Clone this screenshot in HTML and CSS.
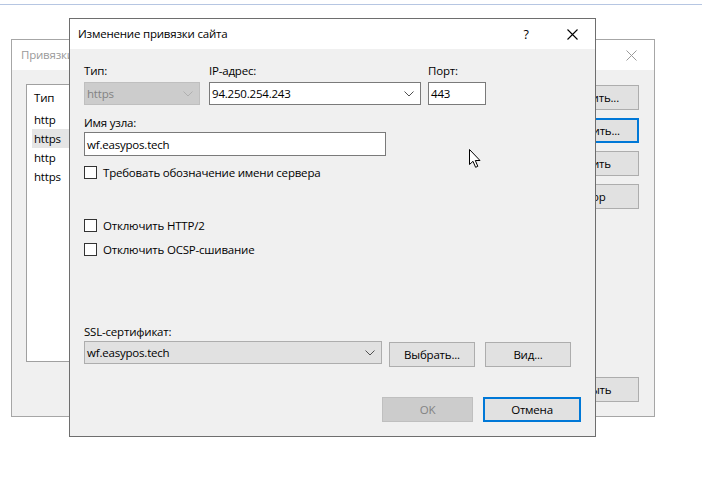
FILE: index.html
```html
<!DOCTYPE html>
<html lang="ru">
<head>
<meta charset="utf-8">
<title>Изменение привязки сайта</title>
<link rel="stylesheet" href="styles.css">
</head>
<body>
<div class="desk">
  <div class="topline"></div>

  <div class="win back">
    <div class="tb">
      <span class="ttl inactive">Привязки сайта</span>
      <span class="tbbtn close"><svg width="11" height="11" viewBox="0 0 11 11"><path d="M0.5 0.5L10.5 10.5M10.5 0.5L0.5 10.5" stroke="#9a9a9a" stroke-width="1"/></svg></span>
    </div>
    <div class="bbody">
      <div class="list">
        <div class="lh">Тип</div>
        <div class="li">http</div>
        <div class="li sel">https</div>
        <div class="li">http</div>
        <div class="li">https</div>
      </div>
      <div class="bcol">
        <button class="btn bb">Добавить...</button>
        <button class="btn bb focus">Изменить...</button>
        <button class="btn bb">Удалить</button>
        <button class="btn bb">Обзор</button>
        <button class="btn bb last">Закрыть</button>
      </div>
    </div>
  </div>

  <div class="win front">
    <div class="tb">
      <span class="ttl">Изменение привязки сайта</span>
      <span class="tbbtn help">?</span>
      <span class="tbbtn close"><svg width="11" height="11" viewBox="0 0 11 11"><path d="M0.5 0.5L10.5 10.5M10.5 0.5L0.5 10.5" stroke="#000" stroke-width="1.1"/></svg></span>
    </div>
    <div class="fbody">
      <div class="row1">
        <div class="fld f-type">
          <label class="lbl">Тип:</label>
          <div class="combo disabled"><span>https</span><svg class="chev" width="10" height="6" viewBox="0 0 10 6"><path d="M0.5 0.5L5 5L9.5 0.5" fill="none" stroke="#b0b0b0"/></svg></div>
        </div>
        <div class="fld f-ip">
          <label class="lbl">IP-адрес:</label>
          <div class="combo edit"><span>94.250.254.243</span><svg class="chev" width="10" height="6" viewBox="0 0 10 6"><path d="M0.5 0.5L5 5L9.5 0.5" fill="none" stroke="#505050"/></svg></div>
        </div>
        <div class="fld f-port">
          <label class="lbl">Порт:</label>
          <div class="text"><span>443</span></div>
        </div>
      </div>

      <label class="lbl host-lbl">Имя узла:</label>
      <div class="text host"><span>wf.easypos.tech</span></div>

      <div class="chk first"><span class="box"></span><span>Требовать обозначение имени сервера</span></div>
      <div class="chk second"><span class="box"></span><span>Отключить HTTP/2</span></div>
      <div class="chk"><span class="box"></span><span>Отключить OCSP-сшивание</span></div>

      <label class="lbl ssl-lbl">SSL-сертификат:</label>
      <div class="sslrow">
        <div class="combo btnlike ssl"><span>wf.easypos.tech</span><svg class="chev" width="10" height="6" viewBox="0 0 10 6"><path d="M0.5 0.5L5 5L9.5 0.5" fill="none" stroke="#505050"/></svg></div>
        <button class="btn sbtn">Выбрать...</button>
        <button class="btn sbtn">Вид...</button>
      </div>

      <div class="foot">
        <button class="btn ok" disabled>OK</button>
        <button class="btn cancel">Отмена</button>
      </div>
    </div>
  </div>

  <svg class="cursor" width="13" height="20" viewBox="0 0 13 20"><path d="M0.5 0.5L0.5 15.5L4 12.3L6.6 18.3L8.8 17.3L6.3 11.5L11 11.5Z" fill="#fff" stroke="#000" stroke-width="1" stroke-linejoin="miter"/></svg>
</div>
</body>
</html>
```

FILE: styles.css
```css
* { box-sizing: border-box; }
html, body { margin: 0; padding: 0; background: #fff; }
body {
  font-family: "Segoe UI", "Open Sans", "Noto Sans", sans-serif;
  font-size: 11.5px;
  letter-spacing: -0.2px;
  color: #000;
}
.desk { position: relative; width: 702px; height: 481px; overflow: hidden; }
.topline { height: 1px; background: #b6c6e2; margin-top: 4px; }

.win { position: absolute; display: flex; flex-direction: column; background: #f0f0f0; }
.back { left: 11px; top: 39px; width: 644px; height: 378px; border: 1px solid #a6a6a6; }
.front { left: 69px; top: 18px; width: 527px; height: 419px; border: 1px solid #6e6e6e; }

.tb { height: 30px; background: #fff; display: flex; align-items: center; flex: none; }
.ttl { flex: 1; padding-left: 8px; white-space: nowrap; overflow: hidden; line-height: 16px; }
.back .ttl { padding-left: 9px; }
.inactive { color: #9a9a9a; }
.tbbtn { width: 46px; height: 30px; display: flex; align-items: center; justify-content: center; flex: none; }
.help { font-size: 12.5px; }

/* back window */
.bbody { flex: 1; display: flex; padding: 14px 15px 14px 14px; }
.list { width: 500px; height: 278px; background: #fff; border: 1px solid #a0a0a0; flex: none; }
.lh { height: 25px; line-height: 25px; padding-left: 7px; }
.li { height: 19px; line-height: 19px; margin-left: 5px; padding-left: 2px; }
.li.sel { background: #e5e5e5; }
.bcol { margin-left: auto; width: 101px; display: flex; flex-direction: column; gap: 8px; padding-top: 1px; }
.btn {
  font: inherit; letter-spacing: inherit; color: #000; background: #e1e1e1; border: 1px solid #adadad;
  padding: 0; margin: 0; display: flex; align-items: center; justify-content: center;
}
.bb { height: 25px; width: 101px; }
.bb.focus { border: 2px solid #0078d7; }
.bb.last { margin-top: auto; }

/* front window */
.fbody { flex: 1; display: flex; flex-direction: column; padding: 14px; }
.lbl { display: block; line-height: 16px; height: 16px; }
.row1 { display: flex; }
.f-type { width: 116px; }
.f-ip { width: 212px; margin-left: 9px; }
.f-port { width: 58px; margin-left: 7px; }
.fld .lbl { margin-bottom: 3px; }

.combo, .text {
  height: 23px; display: flex; align-items: center; padding-left: 2px; white-space: nowrap;
}
.combo span, .text span { flex: 1; }
.combo .chev { margin-right: 6px; flex: none; }
.disabled { background: #cccccc; border: 1px solid #bfbfbf; color: #838383; }
.edit { background: #fff; border: 1px solid #7a7a7a; }
.text { background: #fff; border: 1px solid #7a7a7a; }
.host-lbl { margin-top: 10px; margin-bottom: 1px; }
.host { width: 302px; height: 24px; }

.chk { display: flex; align-items: center; height: 16px; margin-top: 8px; }
.chk.first { margin-top: 8px; }
.chk.second { margin-top: 37px; }
.box { width: 13px; height: 13px; border: 1px solid #333; background: #fff; margin-right: 6px; flex: none; }

.ssl-lbl { margin-top: 67px; margin-bottom: 1px; }
.sslrow { display: flex; align-items: flex-start; }
.btnlike { background: #e1e1e1; border: 1px solid #adadad; }
.ssl { width: 298px; }
.sbtn { width: 86px; height: 25px; margin-top: 1px; margin-left: 7px; }
.sbtn + .sbtn { margin-left: 10px; }

.foot { margin-top: auto; display: flex; justify-content: flex-end; gap: 10px; }
.ok { width: 91px; height: 25px; background: #cccccc; border-color: #bfbfbf; color: #838383; }
.cancel { width: 98px; height: 25px; border: 2px solid #0078d7; }

.cursor { position: absolute; left: 469px; top: 149px; }
```
